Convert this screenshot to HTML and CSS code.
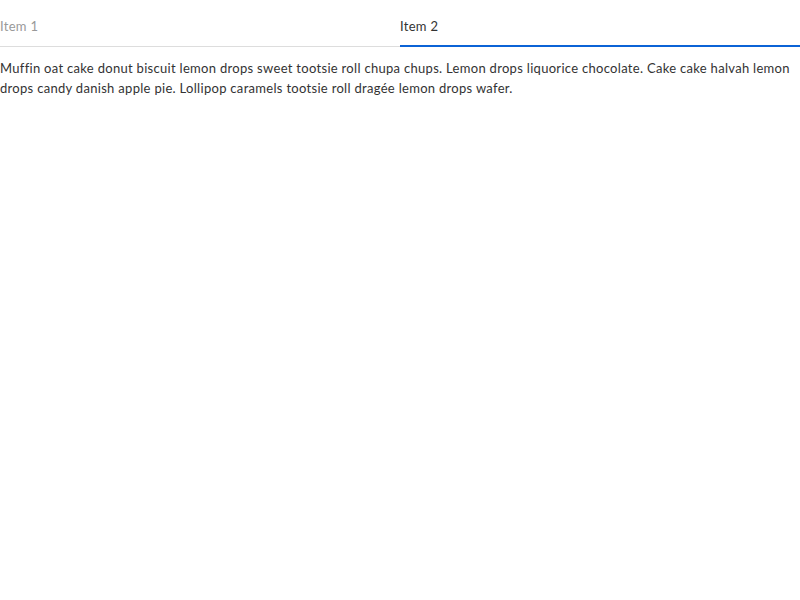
FILE: index.html
```html
<!DOCTYPE html>
<html>
<head>
<meta charset="utf-8">
<link rel="stylesheet" href="styles.css">
</head>
<body>
<div class="tabs">
  <div class="tab">Item 1</div>
  <div class="tab active">Item 2</div>
</div>
<p class="content">Muffin oat cake donut biscuit lemon drops sweet tootsie roll chupa chups. Lemon drops liquorice chocolate. Cake cake halvah lemon drops candy danish apple pie. Lollipop caramels tootsie roll dragée lemon drops wafer.</p>
</body>
</html>
```
FILE: styles.css
```css
body {
  margin: 0;
  font-family: Lato, "Noto Sans", sans-serif;
  font-size: 13px;
  letter-spacing: 0.3px;
  color: #333;
  background: #fff;
}
.tabs {
  display: flex;
  border-bottom: 1px solid #ddd;
}
.tab {
  flex: 1;
  padding: 16px 0 9px;
  line-height: 20px;
  color: #999;
  margin-bottom: -1px;
  border-bottom: 2px solid transparent;
}
.tab.active {
  color: #333;
  border-bottom-color: #0b63d6;
}
.content {
  margin: 11px 0 0;
  line-height: 20px;
}
```
